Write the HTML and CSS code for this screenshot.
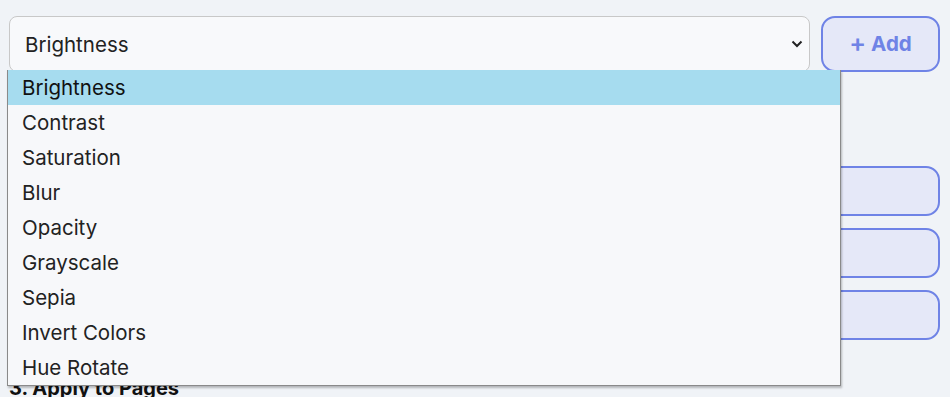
FILE: index.html
```html
<!DOCTYPE html>
<html lang="en">
<head>
	<meta charset="UTF-8">
	<meta name="viewport" content="width=device-width, initial-scale=1.0">
	<title>Filters</title>
	<link rel="stylesheet" href="styles.css">
</head>
<body>
	<div class="panel">
		<div class="row">
			<div class="select">
				<span>Brightness</span>
				<svg class="chevron" width="12" height="8" viewBox="0 0 12 8"><path d="M1.5 1.5 L6 6 L10.5 1.5" fill="none" stroke="#222" stroke-width="2"/></svg>
			</div>
			<div class="add"><span class="plus">+</span> Add</div>
		</div>

		<div class="presets">
			<div class="preset"></div>
			<div class="preset"></div>
			<div class="preset"></div>
		</div>

		<h3 class="heading">3. Apply to Pages</h3>

		<div class="dropdown">
			<div class="option active">Brightness</div>
			<div class="option">Contrast</div>
			<div class="option">Saturation</div>
			<div class="option">Blur</div>
			<div class="option">Opacity</div>
			<div class="option">Grayscale</div>
			<div class="option">Sepia</div>
			<div class="option">Invert Colors</div>
			<div class="option">Hue Rotate</div>
		</div>
	</div>
</body>
</html>
```

FILE: styles.css
```css
body {
	margin: 0;
	background-color: #f0f3f7;
	font-family: Inter, "Noto Sans", sans-serif;
	color: #222;
}
.panel {
	position: relative;
	padding: 16px 10px 0 9px;
}
.row {
	display: flex;
	gap: 11px;
}
.select {
	flex: 1;
	height: 56px;
	box-sizing: border-box;
	display: flex;
	align-items: center;
	justify-content: space-between;
	padding: 0 4px 0 15px;
	border: 1px solid #c8c8c8;
	border-radius: 8px;
	background-color: #f8f9fb;
	font-size: 20.5px;
}
.chevron { margin-right: 2px; }
.add {
	width: 119px;
	height: 56px;
	box-sizing: border-box;
	display: flex;
	align-items: center;
	justify-content: center;
	gap: 5px;
	padding-bottom: 2px;
	border: 2px solid #6f83e6;
	border-radius: 14px;
	background-color: #e5e8f8;
	color: #6f83e6;
	font-size: 20.5px;
	font-weight: 700;
}
.plus { font-size: 25px; font-weight: 600; }
.presets {
	display: flex;
	flex-direction: column;
	gap: 12px;
	margin-top: 94px;
}
.preset {
	height: 50px;
	box-sizing: border-box;
	border: 2px solid #6f83e6;
	border-radius: 14px;
	background-color: #e5e8f8;
}
.heading {
	margin: 36px 0 0;
	font-size: 20px;
	font-weight: 700;
	line-height: 24px;
	color: #111;
}
.dropdown {
	position: absolute;
	top: 70px;
	left: 7px;
	width: 834px;
	box-sizing: border-box;
	background-color: #f7f8fa;
	border: 1px solid #8a8a8a;
	border-top: none;
	box-shadow: 1px 2px 2px rgba(0, 0, 0, 0.25);
}
.option {
	height: 35px;
	line-height: 36px;
	padding-left: 14px;
	font-size: 20.5px;
	color: #222;
}
.option.active {
	background-color: #a6dcef;
	color: #111;
}
```
